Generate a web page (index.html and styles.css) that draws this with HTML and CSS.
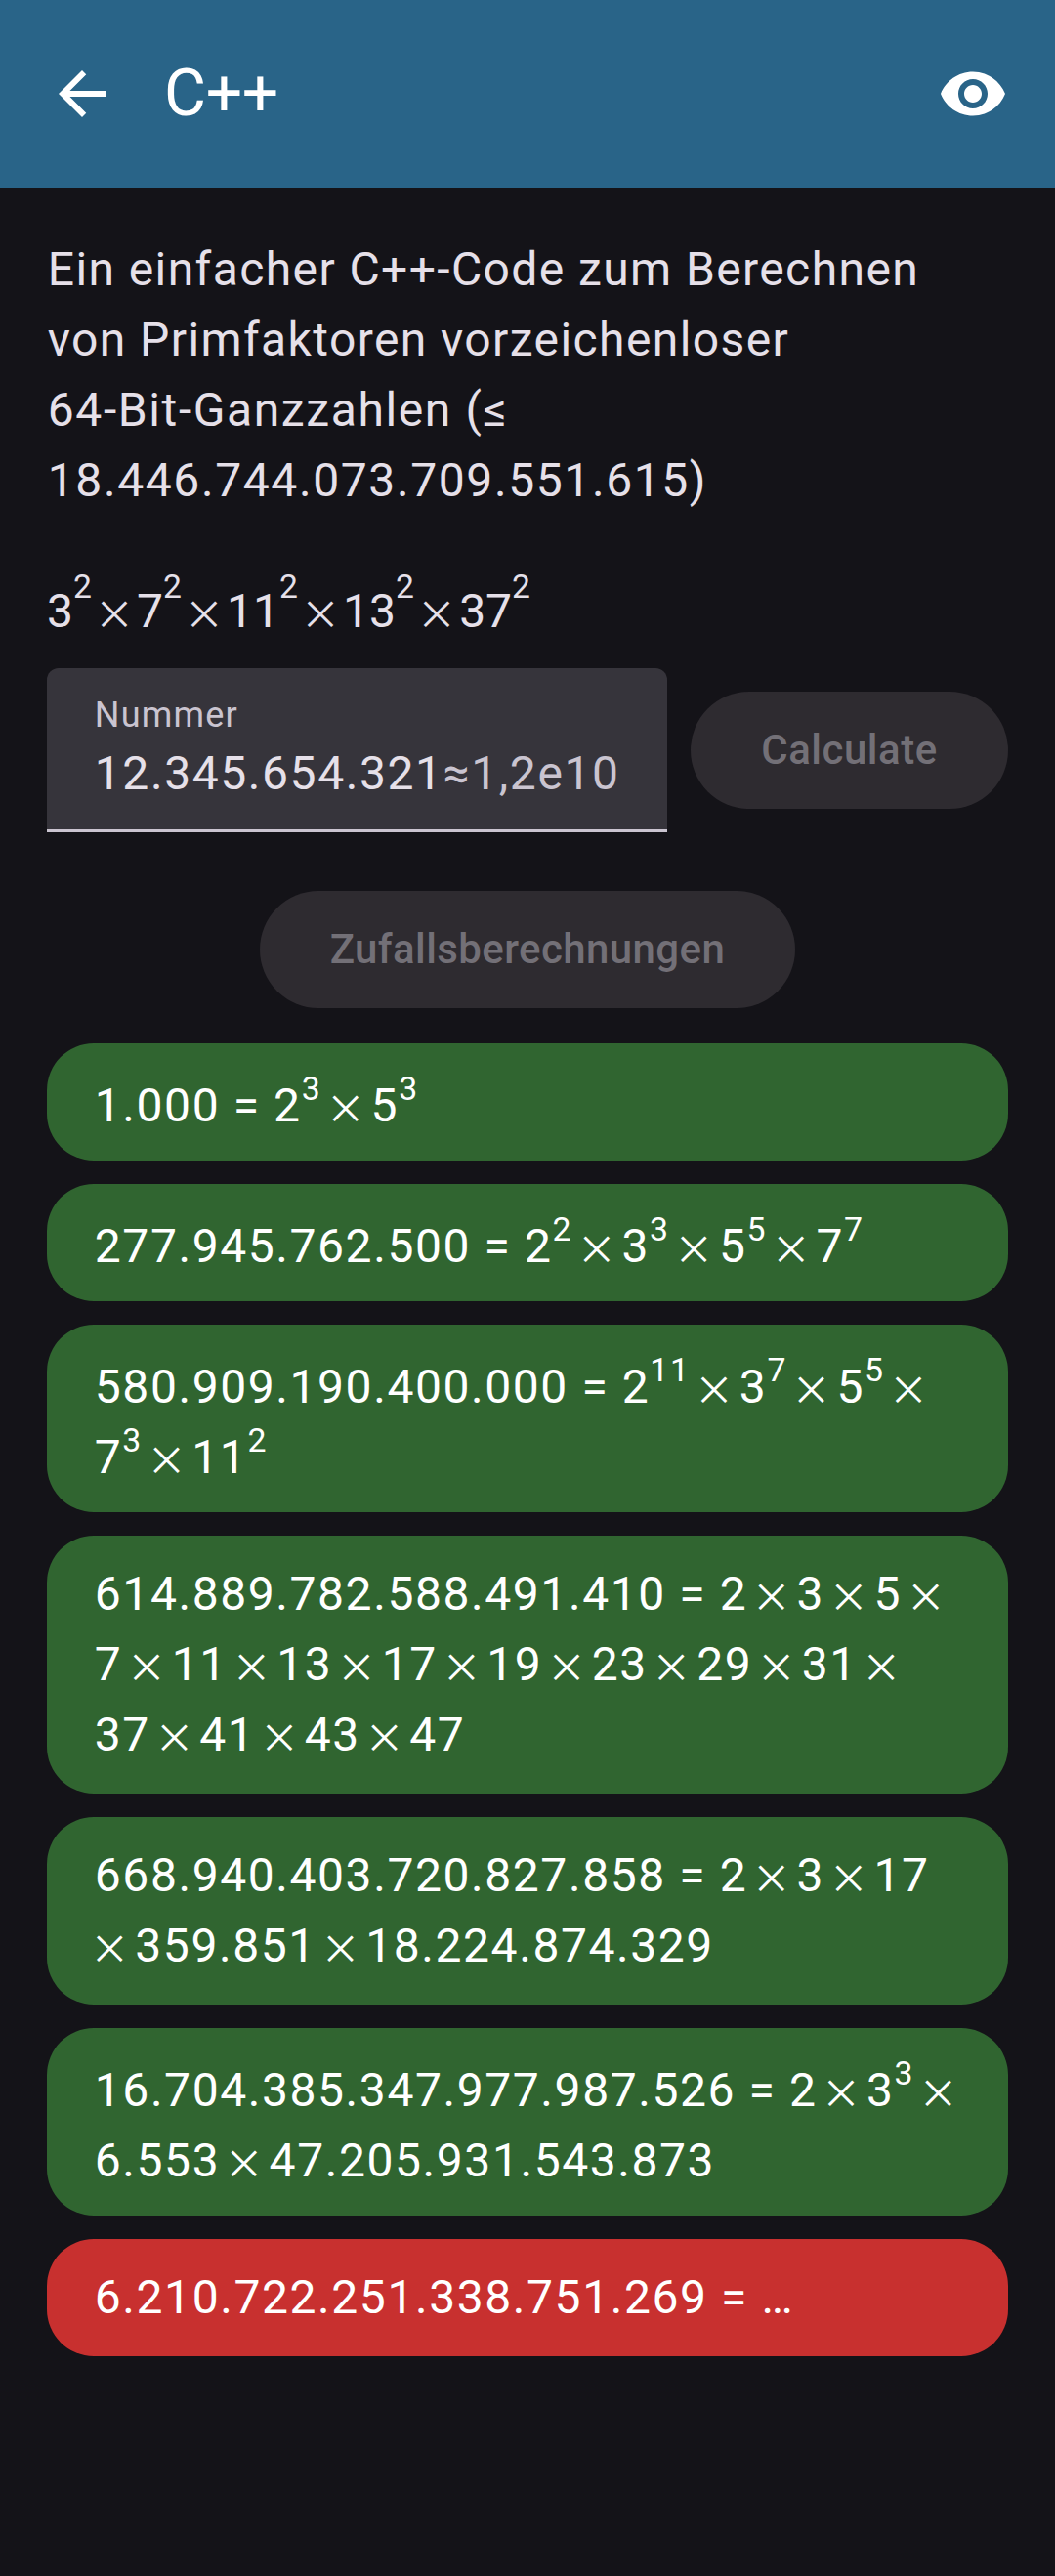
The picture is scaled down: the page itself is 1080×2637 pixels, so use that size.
FILE: index.html
```html
<!DOCTYPE html>
<html lang="de">
<head>
<meta charset="utf-8">
<title>C++</title>
<link rel="stylesheet" href="styles.css">
</head>
<body>
<header class="app-bar">
  <svg class="icon" viewBox="0 0 24 24"><path d="M20 11H7.83l5.59-5.59L12 4l-8 8 8 8 1.41-1.41L7.83 13H20v-2z"/></svg>
  <h1 class="title">C++</h1>
  <svg class="icon" viewBox="0 0 24 24"><path d="M12 4.5C7 4.5 2.73 7.61 1 12c1.73 4.39 6 7.5 11 7.5s9.27-3.11 11-7.5c-1.73-4.39-6-7.5-11-7.5zM12 17c-2.76 0-5-2.24-5-5s2.24-5 5-5 5 2.24 5 5-2.24 5-5 5zm0-8c-1.66 0-3 1.34-3 3s1.34 3 3 3 3-1.34 3-3-1.34-3-3-3z"/></svg>
</header>
<main class="content">
  <p class="description">Ein einfacher C++-Code zum Berechnen<br>von Primfaktoren vorzeichenloser<br><span class="limit">64-Bit-Ganzzahlen (≤<br>18.446.744.073.709.551.615)</span></p>
  <p class="formula">3<sup>2</sup><i>×</i>7<sup>2</sup><i>×</i>11<sup>2</sup><i>×</i>13<sup>2</sup><i>×</i>37<sup>2</sup></p>
  <div class="input-row">
    <div class="field">
      <span class="label">Nummer</span>
      <span class="value">12.345.654.321<span class="approx">≈1,2e10</span></span>
    </div>
    <button class="button calculate" disabled>Calculate</button>
  </div>
  <button class="button random" disabled>Zufallsberechnungen</button>
  <div class="results">
    <div class="card raised">1.000 = 2<sup>3</sup><i>×</i>5<sup>3</sup></div>
    <div class="card raised">277.945.762.500 = 2<sup>2</sup><i>×</i>3<sup>3</sup><i>×</i>5<sup>5</sup><i>×</i>7<sup>7</sup></div>
    <div class="card raised">580.909.190.400.000 = 2<sup>11</sup><i>×</i>3<sup>7</sup><i>×</i>5<sup>5</sup><i>×</i><br>7<sup>3</sup><i>×</i>11<sup>2</sup></div>
    <div class="card">614.889.782.588.491.410 = 2<i>×</i>3<i>×</i>5<i>×</i><br>7<i>×</i>11<i>×</i>13<i>×</i>17<i>×</i>19<i>×</i>23<i>×</i>29<i>×</i>31<i>×</i><br>37<i>×</i>41<i>×</i>43<i>×</i>47</div>
    <div class="card">668.940.403.720.827.858 = 2<i>×</i>3<i>×</i>17<br><i class="leading">×</i>359.851<i>×</i>18.224.874.329</div>
    <div class="card raised">16.704.385.347.977.987.526 = 2<i>×</i>3<sup>3</sup><i>×</i><br>6.553<i>×</i>47.205.931.543.873</div>
    <div class="card error">6.210.722.251.338.751.269 = …</div>
  </div>
</main>
</body>
</html>
```

FILE: styles.css
```css
* { box-sizing: border-box; }

body {
  margin: 0;
  min-height: 2637px;
  background: #141318;
  color: #e6e0e9;
  font-family: Roboto, sans-serif;
  font-size: 48px;
  line-height: 72px;
}

.app-bar {
  display: flex;
  align-items: center;
  gap: 48px;
  height: 192px;
  padding: 0 48px;
  background: #296488;
  color: #fff;
}

.icon {
  flex: none;
  width: 72px;
  height: 72px;
  fill: currentColor;
}

.title {
  flex: 1;
  margin: 0;
  font-size: 66px;
  font-weight: 400;
  letter-spacing: -0.3px;
  line-height: 84px;
}

.content {
  display: flex;
  flex-direction: column;
  padding: 48px;
}

.description {
  margin: 0;
  padding-left: 0.8px;
  letter-spacing: 1.4px;
}

.limit { letter-spacing: 1.6px; }

.formula {
  height: 94px;
  margin: 62px 0 0;
}

sup {
  font-size: 33.8px;
  line-height: 0;
  vertical-align: 22px;
}

.formula sup {
  font-size: 33.6px;
  vertical-align: 30px;
}

/* multiplication sign between two factors */
i {
  display: inline-block;
  width: 50.4px;
  padding-right: 1.2px;
  line-height: 0;
  font-family: "Noto Sans CJK JP", sans-serif;
  font-size: 41px;
  font-style: normal;
  font-weight: 400;
  letter-spacing: 0;
  text-align: center;
  vertical-align: -1.5px;
}

.formula i {
  width: 46.2px;
  padding-right: 0;
}

i.leading {
  width: 41px;
  margin: 0 5.5px 0 -5px;
  padding-right: 0;
}

.input-row {
  display: flex;
  align-items: center;
  gap: 24px;
}

.field {
  display: flex;
  flex: 1;
  flex-direction: column;
  height: 168px;
  padding: 24px 0 0 48.8px;
  border-bottom: 3px solid #cac4d0;
  border-radius: 12px 12px 0 0;
  background: #36343b;
  white-space: nowrap;
}

.label {
  color: #cac4d0;
  font-size: 36px;
  letter-spacing: 1.2px;
  line-height: 48px;
}

.value { letter-spacing: 1.58px; }

.approx { color: #cac4d0; }

.button {
  height: 120px;
  padding: 0 72px;
  border: 0;
  border-radius: 60px;
  background: #2e2b30;
  color: #737077;
  font: 500 42px/60px Roboto, sans-serif;
  letter-spacing: 0.4px;
}

.calculate {
  width: 325px;
  letter-spacing: 0.5px;
}

.random {
  align-self: center;
  margin: 60px 0 36px;
}

.results {
  display: flex;
  flex-direction: column;
  gap: 24px;
}

.card {
  padding: 24px 0 24px 48.8px;
  border-radius: 48px;
  background: #306530;
  color: #fff;
  letter-spacing: 1.57px;
  white-space: nowrap;
}

.raised {
  padding-top: 28px;
  padding-bottom: 20px;
}

.error { background: #c8302f; }
```
